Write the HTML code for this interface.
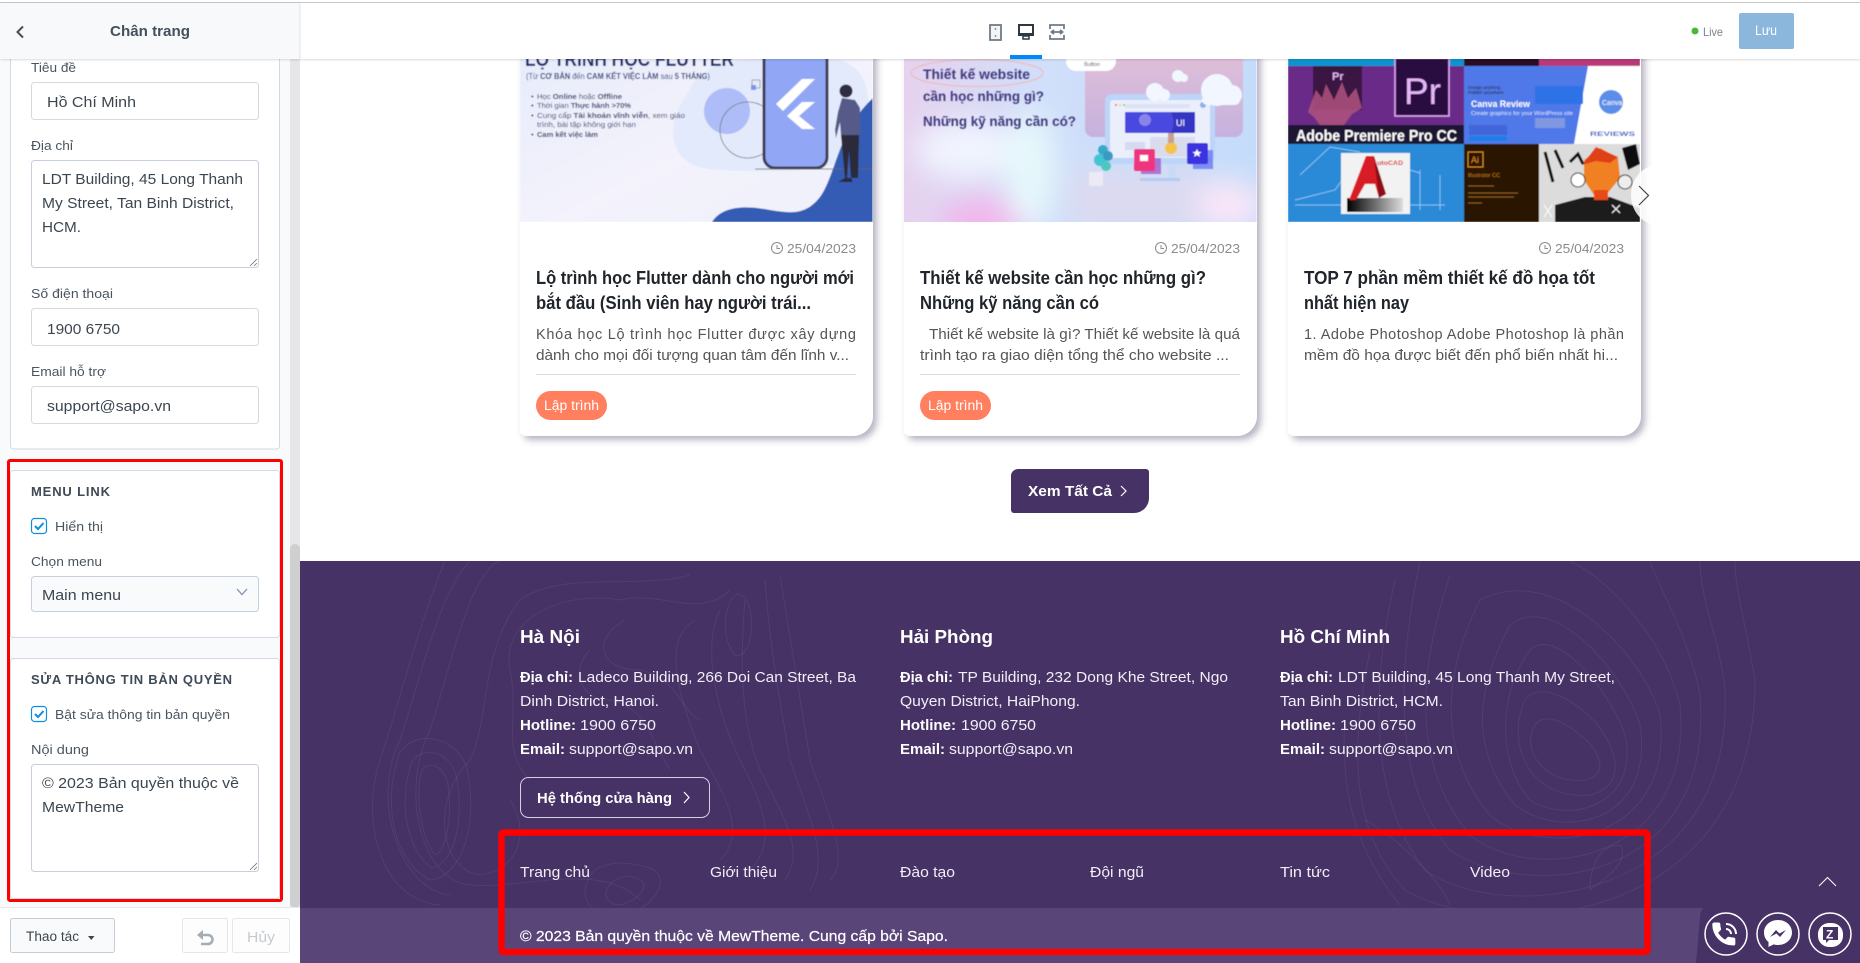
<!DOCTYPE html>
<html lang="vi"><head><meta charset="utf-8"><title>Chân trang</title>
<style>
html,body{margin:0;padding:0;background:#fff;overflow:hidden;width:1860px;height:963px}
svg{display:block;position:absolute;left:0;top:0}
text{font-family:"Liberation Sans","Noto Sans CJK SC",sans-serif}
.lab{font-size:13px;fill:#4a5560}.inp{font-size:15px;fill:#3c4650}
.h{font-size:13px;font-weight:bold;fill:#3f4a56}
.dt{font-size:13px;fill:#8b8b8b}.ti{font-size:18px;font-weight:bold;fill:#20252b}.de{font-size:14.5px;fill:#555}
.tg{font-size:13.5px;fill:#fff}
.f{font-size:15px;fill:#f1eef6}.fb{font-size:15px;fill:#fff;font-weight:bold}.fh{font-size:18px;fill:#fff;font-weight:bold}
.c path{fill:none;stroke:#fff;stroke-opacity:.06;stroke-width:1}
</style></head><body>
<svg width="1860" height="963" viewBox="0 0 1860 963" xmlns="http://www.w3.org/2000/svg">
<defs>
<filter id="sh" x="-10%" y="-10%" width="120%" height="120%"><feDropShadow dx="4" dy="4" stdDeviation="3.5" flood-color="#4a4468" flood-opacity=".4"/></filter>
<filter id="b1"><feGaussianBlur stdDeviation=".45"/></filter>
<filter id="b9" x="-60%" y="-60%" width="220%" height="220%"><feGaussianBlur stdDeviation="14"/></filter>
<filter id="sd" x="-5%" y="-20%" width="110%" height="160%"><feDropShadow dx="0" dy="1" stdDeviation="1" flood-color="#000" flood-opacity=".14"/></filter>
<clipPath id="c1"><rect x="520" y="40" width="352.500" height="182"/></clipPath>
<clipPath id="c2"><rect x="904" y="40" width="352.500" height="182"/></clipPath>
<clipPath id="c3"><rect x="1288" y="40" width="352" height="182"/></clipPath>
<clipPath id="ft"><rect x="300" y="561" width="1560" height="402"/></clipPath>
<linearGradient id="g1" x1="0" y1="0" x2="1" y2="1"><stop offset="0" stop-color="#e6ebfb"/><stop offset=".55" stop-color="#f4f3fc"/><stop offset="1" stop-color="#eef0fb"/></linearGradient>
<linearGradient id="g2" x1="0" y1="0" x2="1" y2="0"><stop offset="0" stop-color="#e6d2ee"/><stop offset=".4" stop-color="#d0dffa"/><stop offset="1" stop-color="#c4dcfa"/></linearGradient>
<linearGradient id="g3" x1="0" y1="0" x2="0" y2="1"><stop offset="0" stop-color="#e8c2d6"/><stop offset="1" stop-color="#c5b2de"/></linearGradient>
<linearGradient id="g4" x1="0" y1="0" x2="1" y2="0"><stop offset="0" stop-color="#000"/><stop offset="1" stop-color="#ddd"/></linearGradient>
</defs>

<rect width="1860" height="963" fill="#fff"/>

<!-- cards -->
<g filter="url(#sh)">
<path d="M520 40H873V416a20 20 0 0 1-20 20H526a6 6 0 0 1-6-6Z" fill="#fff"/>
<path d="M904 40H1257V416a20 20 0 0 1-20 20H910a6 6 0 0 1-6-6Z" fill="#fff"/>
<path d="M1288 40H1641V416a20 20 0 0 1-20 20H1294a6 6 0 0 1-6-6Z" fill="#fff"/>
</g>

<!-- image 1 -->
<g clip-path="url(#c1)"><g filter="url(#b1)">
<rect x="520" y="40" width="353" height="182" fill="url(#g1)"/>
<path d="M690 90C700 60 760 50 840 60C870 70 875 100 860 150C840 175 760 172 720 170C670 170 660 130 690 90Z" fill="#e3eafb"/>
<path d="M712 222C722 206 745 205 770 210C790 213 805 216 820 197C836 175 838 130 873 98V222Z" fill="#365cb4"/>
<circle cx="727" cy="111" r="23" fill="#aebdf7"/>
<circle cx="748" cy="130" r="28" fill="none" stroke="#777" stroke-width=".8"/>
<rect x="752" y="80" width="8" height="8" fill="none" stroke="#777" stroke-width=".6"/><rect x="751" y="85" width="5" height="5" fill="#7f95ea"/>
<rect x="764" y="40" width="63" height="128" rx="11" fill="#91a7f6" stroke="#3f3d56" stroke-width="3"/>
<path d="M755 169H873" stroke="#666" stroke-width=".8"/>
<path d="M815 79H802L776 104L783 111Z" fill="#fff"/>
<path d="M815 102H802L787 116L802 129H815L799 116Z" fill="#fff"/>
<circle cx="846" cy="91" r="6.500" fill="#2f2e41"/>
<path d="M842 98L855 100L860 108V135H841L840 122L836 138L835 130L838 112Z" fill="#575a89"/>
<path d="M841 135H859L858 178H851L849 150L847 178H851L853 182H838L845 178Z" fill="#2b2a3a"/>
<text x="525" y="66" font-size="20" font-weight="bold" fill="#1f2f6b" textLength="209" lengthAdjust="spacingAndGlyphs">LỘ TRÌNH HỌC FLUTTER</text>
<text x="526" y="79" font-size="8" fill="#2a3a78" textLength="184" lengthAdjust="spacingAndGlyphs">(Từ <tspan font-weight="bold">CƠ BẢN</tspan> đến <tspan font-weight="bold">CAM KẾT VIỆC LÀM</tspan> sau <tspan font-weight="bold">5 THÁNG</tspan>)</text>
<g font-size="7.500" fill="#2a3468">
<text x="531" y="99">•</text><text x="537" y="99" textLength="85" lengthAdjust="spacingAndGlyphs">Học <tspan font-weight="bold">Online</tspan> hoặc <tspan font-weight="bold">Offline</tspan></text>
<text x="531" y="108">•</text><text x="537" y="108" textLength="94" lengthAdjust="spacingAndGlyphs">Thời gian <tspan font-weight="bold">Thực hành &gt;70%</tspan></text>
<text x="531" y="118">•</text><text x="537" y="118" textLength="148" lengthAdjust="spacingAndGlyphs">Cung cấp <tspan font-weight="bold">Tài khoản vĩnh viễn</tspan>, xem giáo</text>
<text x="537" y="127" textLength="99" lengthAdjust="spacingAndGlyphs">trình, bài tập không giới hạn</text>
<text x="531" y="137">•</text><text x="537" y="137" textLength="61" font-weight="bold" lengthAdjust="spacingAndGlyphs">Cam kết việc làm</text>
</g></g></g>

<!-- image 2 -->
<g clip-path="url(#c2)">
<rect x="904" y="40" width="353" height="182" fill="url(#g2)"/>
<g filter="url(#b9)"><ellipse cx="985" cy="222" rx="45" ry="26" fill="#f2b6ec"/><ellipse cx="965" cy="150" rx="50" ry="28" fill="#f1f5ff"/><ellipse cx="1030" cy="170" rx="25" ry="60" fill="#e6f8fb"/><ellipse cx="1225" cy="205" rx="40" ry="25" fill="#fbe6f8"/><rect x="1070" y="170" width="130" height="60" fill="#dcdaf0"/></g>
<g filter="url(#b1)">
<rect x="1085" y="30" width="158" height="107" rx="8" fill="url(#g3)"/>
<rect x="1066" y="50" width="50" height="21" rx="10" fill="#fff"/>
<text x="1084" y="66" font-size="5.500" fill="#445">Button</text>
<rect x="1105" y="94" width="110" height="70" rx="7" fill="#bcd5f8"/>
<rect x="1110" y="100" width="100" height="58" rx="3" fill="#ebeffb"/>
<rect x="1125" y="112" width="70" height="21" rx="1" fill="#4a4ae0"/><path d="M1171 112h24v21h-24q5-10 0-21Z" fill="#3434c4"/>
<text x="1176" y="126" font-size="9" fill="#fff">UI</text>
<circle cx="1145" cy="120" r="6" fill="#8a84ea"/>
<rect x="1125" y="104" width="65" height="4" rx="2" fill="#dce2f6"/>
<circle cx="1116" cy="105" r="1" fill="#e55"/><circle cx="1120" cy="105" r="1" fill="#ec5"/><circle cx="1124" cy="105" r="1" fill="#5c7"/><circle cx="1203" cy="105" r="3" fill="#8db0ec"/>
<rect x="1150" y="137" width="45" height="20" fill="#d9dcec"/>
<rect x="1125" y="142" width="20" height="8" fill="#d5daf0"/>
<circle cx="1171" cy="148" r="6" fill="#f6c34a"/><rect x="1168" y="133" width="6" height="10" fill="#c8a090"/>
<rect x="1168" y="164" width="8" height="14" fill="#cadaf6"/><rect x="1140" y="178" width="40" height="3" fill="#b4cbf4"/>
<rect x="1141" y="158" width="20" height="16" fill="#9a4ac8" opacity=".7"/>
<rect x="1134" y="149" width="21" height="22" rx="2" fill="#f0357f"/><rect x="1140" y="155" width="8" height="6" fill="#fff"/>
<rect x="1193" y="150" width="20" height="19" fill="#4a58f0" opacity=".6"/>
<rect x="1187" y="143" width="21" height="21" rx="2" fill="#3b33e0"/><path d="M1197 149l1.500 3h3l-2.500 2 1 3-3-2-3 2 1-3-2.500-2h3Z" fill="#fff"/>
<circle cx="1103" cy="150" r="5" fill="#38a8c8"/><circle cx="1100" cy="160" r="6" fill="#44c4d4"/><circle cx="1108" cy="156" r="5" fill="#3a9ac4"/><circle cx="1106" cy="166" r="5" fill="#4cc8c0"/>
<rect x="1089" y="172" width="14" height="14" fill="#eceaf4"/>
<g fill="#f2f6ff"><circle cx="1155" cy="92" r="9"/><circle cx="1164" cy="95" r="6"/><circle cx="1217" cy="90" r="16"/><circle cx="1232" cy="95" r="10"/><rect x="1202" y="95" width="38" height="10" rx="5"/><circle cx="1178" cy="76" r="6"/><circle cx="1184" cy="78" r="4"/></g>
<ellipse cx="977" cy="73" rx="66" ry="13.500" fill="none" stroke="#edb8b8" stroke-width="1"/>
<g font-size="13.500" font-weight="bold" fill="#403a7e">
<text x="923" y="79" textLength="107" lengthAdjust="spacingAndGlyphs">Thiết kế website</text>
<text x="923" y="101" textLength="121" lengthAdjust="spacingAndGlyphs">cần học những gì?</text>
<text x="923" y="126" textLength="153" lengthAdjust="spacingAndGlyphs">Những kỹ năng cần có?</text></g>
</g></g>

<!-- image 3 -->
<g clip-path="url(#c3)"><g filter="url(#b1)">
<rect x="1288" y="40" width="176" height="26" fill="#0f94d0"/><rect x="1464" y="40" width="75" height="26" fill="#2a0a24"/><rect x="1539" y="40" width="101" height="26" fill="#b83a78"/>
<rect x="1288" y="66" width="176" height="59" fill="#6b2a88"/>
<rect x="1288" y="125" width="176" height="19" fill="#1f1330"/>
<rect x="1313" y="66" width="49" height="44" fill="#3a1242"/>
<path d="M1308 112l8-22 6 8 4-14 8 16 8-18 6 16 8-10 6 20-10 6-8 11h-24l-6-8Z" fill="#b0557e" opacity=".85"/>
<text x="1332" y="80" font-size="11" font-weight="bold" fill="#e5b5fa">Pr</text>
<rect x="1395" y="58" width="54" height="58" fill="#2a0c40" stroke="#e0a8f4" stroke-width="1.500"/>
<text x="1404" y="104" font-size="37" fill="#e5b5fa">Pr</text>
<text x="1296" y="141" font-size="16" font-weight="bold" fill="#fff" textLength="161" lengthAdjust="spacingAndGlyphs">Adobe Premiere Pro CC</text>
<rect x="1464" y="66" width="176" height="78" fill="#4f78e8"/>
<path d="M1588 66H1640V144H1574Z" fill="#fff"/>
<rect x="1535" y="86" width="48" height="18" fill="#2f72e8"/>
<text x="1468" y="89" font-size="4.500" fill="#223">Design anything.</text><text x="1468" y="94" font-size="4.500" fill="#223">Publish anywhere.</text>
<text x="1471" y="107" font-size="9" font-weight="bold" fill="#fff" textLength="59" lengthAdjust="spacingAndGlyphs">Canva Review</text>
<text x="1471" y="115" font-size="5.500" fill="#dfe8ff" textLength="102" lengthAdjust="spacingAndGlyphs">Create graphics for your WordPress site</text>
<rect x="1469" y="125" width="38" height="10" fill="#3f66dc"/><rect x="1469" y="136" width="38" height="5" fill="#1f7ee8"/><rect x="1535" y="118" width="30" height="10" fill="#8098e0"/>
<circle cx="1611" cy="102" r="12" fill="#5a8ee8"/><text x="1602" y="105" font-size="7" fill="#fff">Canva</text>
<text x="1590" y="136" font-size="6.500" font-weight="bold" fill="#3d5cc0" textLength="45" lengthAdjust="spacingAndGlyphs">REVIEWS</text>
<rect x="1288" y="144" width="176" height="78" fill="#2a8ad8"/>
<path d="M1295 200l40-10 25-35 60 18M1300 175l30-28 30 5M1420 170v40M1440 175v35M1295 205h150" stroke="#a4d4f8" stroke-width=".7" fill="none"/>
<rect x="1341" y="153" width="69" height="61" fill="#f2f2f2"/>
<rect x="1347" y="198" width="56" height="14" fill="url(#g4)"/>
<path d="M1349 200 1366 156h8l12 38-7 4-4-14h-10l-9 16Z" fill="#d81f26"/>
<path d="M1374 156l12 38-7 4-5-40Z" fill="#8e1015"/>
<text x="1372" y="165" font-size="6.500" font-weight="bold" fill="#d81f26" textLength="31" lengthAdjust="spacingAndGlyphs">AutoCAD</text>
<rect x="1464" y="144" width="75" height="78" fill="#2a1505"/>
<rect x="1468" y="152" width="15" height="15" fill="#2a1505" stroke="#e08a20"/><text x="1471" y="163" font-size="9" fill="#e08a20">Ai</text>
<text x="1468" y="177" font-size="5.500" fill="#c87820">Illustrator CC</text>
<g stroke="#8a5a20" stroke-width="1"><path d="M1468 186h26M1468 193h50M1468 197h46M1468 203h14"/></g>
<rect x="1539" y="144" width="101" height="78" fill="#dcdcdc"/>
<path d="M1555 222V205L1585 197L1610 197L1640 208V222Z" fill="#1e1e1e"/>
<path d="M1584 160l16-12 18 10 2 20-14 17h-12l-10-15Z" fill="#f08020"/><path d="M1582 165l14-18 22 10-8 6-14-2Z" fill="#e04018"/><rect x="1594" y="190" width="14" height="10" fill="#e84818"/>
<path d="M1545 152l8 30M1555 150l8 18M1570 162l8-8 5 10" stroke="#111" stroke-width="3" fill="none"/>
<path d="M1622 148l14-4 4 20-12 6Z" fill="#111"/><circle cx="1578" cy="180" r="7" fill="#fff" stroke="#111"/><circle cx="1625" cy="182" r="7" fill="#eee" stroke="#111"/>
<path d="M1544 205l8 12M1552 205l-8 12M1612 205l8 8M1620 205l-8 8" stroke="#fff"/>
</g></g>
<path d="M1655 165a28 30 0 0 0-24 30a28 30 0 0 0 24 30Z" fill="#fff" fill-opacity=".85"/>
<path d="M1639 186l9.500 9.500-9.500 9.500" fill="none" stroke="#444" stroke-width="1.200"/>

<!-- card text -->
<g fill="none" stroke="#8b8b8b" stroke-width="1"><circle cx="777" cy="248" r="5.500"/><path d="M777 245v3.500h3"/><circle cx="1161" cy="248" r="5.500"/><path d="M1161 245v3.500h3"/><circle cx="1545" cy="248" r="5.500"/><path d="M1545 245v3.500h3"/></g>
<text class="dt" x="787" y="253" textLength="69" lengthAdjust="spacingAndGlyphs">25/04/2023</text>
<text class="dt" x="1171" y="253" textLength="69" lengthAdjust="spacingAndGlyphs">25/04/2023</text>
<text class="dt" x="1555" y="253" textLength="69" lengthAdjust="spacingAndGlyphs">25/04/2023</text>

<text class="ti" x="536" y="284" textLength="318" lengthAdjust="spacingAndGlyphs">Lộ trình học Flutter dành cho người mới</text>
<text class="ti" x="536" y="309" textLength="275" lengthAdjust="spacingAndGlyphs">bắt đầu (Sinh viên hay người trái...</text>
<text class="de" x="536" y="339" textLength="320" lengthAdjust="spacing">Khóa học Lộ trình học Flutter được xây dựng</text>
<text class="de" x="536" y="360" textLength="313" lengthAdjust="spacingAndGlyphs">dành cho mọi đối tượng quan tâm đến lĩnh v...</text>
<rect x="536" y="374" width="320" height="1" fill="#dcdcdc"/>
<rect x="536" y="391" width="71" height="29" rx="14.500" fill="#ff7f5e"/>
<text class="tg" x="544" y="410" textLength="55" lengthAdjust="spacingAndGlyphs">Lập trình</text>

<text class="ti" x="920" y="284" textLength="286" lengthAdjust="spacingAndGlyphs">Thiết kế website cần học những gì?</text>
<text class="ti" x="920" y="309" textLength="179" lengthAdjust="spacingAndGlyphs">Những kỹ năng cần có</text>
<text class="de" x="929" y="339" textLength="311" lengthAdjust="spacingAndGlyphs">Thiết kế website là gì? Thiết kế website là quá</text>
<text class="de" x="920" y="360" textLength="309" lengthAdjust="spacingAndGlyphs">trình tạo ra giao diện tổng thể cho website ...</text>
<rect x="920" y="374" width="320" height="1" fill="#dcdcdc"/>
<rect x="920" y="391" width="71" height="29" rx="14.500" fill="#ff7f5e"/>
<text class="tg" x="928" y="410" textLength="55" lengthAdjust="spacingAndGlyphs">Lập trình</text>

<text class="ti" x="1304" y="284" textLength="291" lengthAdjust="spacingAndGlyphs">TOP 7 phần mềm thiết kế đồ họa tốt</text>
<text class="ti" x="1304" y="309" textLength="105" lengthAdjust="spacingAndGlyphs">nhất hiện nay</text>
<text class="de" x="1304" y="339" textLength="320" lengthAdjust="spacing">1. Adobe Photoshop Adobe Photoshop là phần</text>
<text class="de" x="1304" y="360" textLength="314" lengthAdjust="spacingAndGlyphs">mềm đồ họa được biết đến phổ biến nhất hi...</text>

<!-- view all -->
<path d="M1018 469H1146a3 3 0 0 1 3 3V498a15 15 0 0 1-15 15H1014a3 3 0 0 1-3-3V476a7 7 0 0 1 7-7Z" fill="#473266"/>
<text x="1028" y="496" font-size="15" font-weight="bold" fill="#fff" textLength="84" lengthAdjust="spacingAndGlyphs">Xem Tất Cả</text>
<path d="M1121 486l5 5-5 5" fill="none" stroke="#fff" stroke-width="1.200"/>

<!-- footer -->
<rect x="300" y="561" width="1560" height="402" fill="#473266"/>
<g class="c" clip-path="url(#ft)">
<path d="M445 561C420 620 400 700 380 760C360 820 380 900 440 905"/>
<path d="M470 561C440 590 420 680 400 740C370 800 400 890 450 895"/>
<path d="M500 561C470 570 450 670 430 730C400 790 420 880 470 885C520 890 600 860 640 900"/>
<path d="M690 575C640 590 560 570 520 600C480 650 490 720 470 760C430 800 440 870 480 875C520 870 530 830 510 800"/>
<path d="M730 590C700 620 660 590 620 600C560 590 500 620 510 670C520 720 500 750 530 780"/>
<path d="M780 575C790 640 800 700 810 760C830 820 850 860 830 880"/>
<path d="M765 580C770 650 780 700 790 760C810 820 830 860 810 890"/>
<path d="M745 600C740 660 740 720 760 770C785 820 805 850 785 880"/>
<path d="M720 610C700 650 720 720 740 760C760 800 780 840 750 870"/>
<path d="M695 620C660 640 680 700 700 750C720 790 750 830 720 860"/>
<path d="M625 620C590 640 600 670 640 670C680 680 680 710 700 720"/>
<path d="M590 650C570 670 580 700 610 700C650 710 650 740 670 770"/>
<path d="M735 595C722 610 722 640 735 655C748 660 755 630 750 610C748 598 740 592 735 595Z"/>
<path d="M422 770C414 795 422 840 435 855C448 850 452 810 448 785C444 765 428 760 422 770Z"/>
<path d="M412 762C398 800 406 850 432 868C458 862 464 810 456 775C448 750 422 746 412 762Z"/>
<path d="M400 752C382 800 392 860 430 880C468 875 478 810 466 765C452 735 416 730 400 752Z"/>
<path d="M615 880C600 890 605 905 620 905C640 900 650 885 640 880C630 875 623 875 615 880Z"/>
<path d="M595 870C575 890 585 920 625 915C660 905 670 875 650 868C630 862 610 860 595 870Z"/>
<path d="M1535 725C1520 750 1545 785 1585 780C1610 775 1600 750 1580 735C1565 722 1545 712 1535 725Z"/>
<path d="M1525 700C1505 745 1530 800 1590 795C1630 785 1615 745 1595 722C1575 700 1540 680 1525 700Z"/>
<path d="M1530 650C1500 690 1495 760 1530 800C1570 825 1640 805 1625 735C1610 690 1555 625 1530 650Z"/>
<path d="M1510 625C1475 690 1470 750 1515 805C1560 840 1655 825 1640 725C1625 675 1555 590 1510 625Z"/>
<path d="M1480 600C1440 680 1440 755 1490 815C1540 860 1675 845 1660 715C1645 660 1560 560 1480 600Z"/>
<path d="M1450 575C1415 680 1415 770 1470 835C1530 885 1695 865 1680 705C1665 640 1610 580 1570 561"/>
<path d="M1420 561C1395 680 1395 785 1450 850C1520 900 1715 890 1700 695C1690 640 1660 590 1650 561"/>
<path d="M1395 580C1370 690 1370 800 1425 870C1500 925 1735 905 1725 690C1720 640 1700 600 1700 561"/>
<path d="M1370 650C1350 750 1350 830 1405 890C1500 945 1755 925 1755 680C1745 620 1735 590 1735 561"/>
<path d="M1345 720C1340 790 1355 850 1400 905"/>
<path d="M1365 820C1400 840 1440 880 1450 905"/>
<path d="M1590 890C1610 875 1630 860 1620 845C1600 845 1590 865 1590 890Z"/>
</g>
<rect x="300" y="908" width="1560" height="55" fill="#5a4579"/>

<text class="fh" x="520" y="643" textLength="60" lengthAdjust="spacingAndGlyphs">Hà Nội</text>
<text class="fh" x="900" y="643" textLength="93" lengthAdjust="spacingAndGlyphs">Hải Phòng</text>
<text class="fh" x="1280" y="643" textLength="110" lengthAdjust="spacingAndGlyphs">Hồ Chí Minh</text>

<text class="fb" x="520" y="682" textLength="53" lengthAdjust="spacingAndGlyphs">Địa chỉ:</text><text class="f" x="578" y="682" textLength="278" lengthAdjust="spacingAndGlyphs">Ladeco Building, 266 Doi Can Street, Ba</text>
<text class="f" x="520" y="706" textLength="139" lengthAdjust="spacingAndGlyphs">Dinh District, Hanoi.</text>
<text class="fb" x="520" y="730" textLength="56" lengthAdjust="spacingAndGlyphs">Hotline:</text><text class="f" x="580" y="730" textLength="76" lengthAdjust="spacingAndGlyphs">1900 6750</text>
<text class="fb" x="520" y="754" textLength="45" lengthAdjust="spacingAndGlyphs">Email:</text><text class="f" x="569" y="754" textLength="124" lengthAdjust="spacingAndGlyphs">support@sapo.vn</text>

<text class="fb" x="900" y="682" textLength="53" lengthAdjust="spacingAndGlyphs">Địa chỉ:</text><text class="f" x="958" y="682" textLength="270" lengthAdjust="spacingAndGlyphs">TP Building, 232 Dong Khe Street, Ngo</text>
<text class="f" x="900" y="706" textLength="180" lengthAdjust="spacingAndGlyphs">Quyen District, HaiPhong.</text>
<text class="fb" x="900" y="730" textLength="56" lengthAdjust="spacingAndGlyphs">Hotline:</text><text class="f" x="961" y="730" textLength="75" lengthAdjust="spacingAndGlyphs">1900 6750</text>
<text class="fb" x="900" y="754" textLength="45" lengthAdjust="spacingAndGlyphs">Email:</text><text class="f" x="949" y="754" textLength="124" lengthAdjust="spacingAndGlyphs">support@sapo.vn</text>

<text class="fb" x="1280" y="682" textLength="53" lengthAdjust="spacingAndGlyphs">Địa chỉ:</text><text class="f" x="1338" y="682" textLength="277" lengthAdjust="spacingAndGlyphs">LDT Building, 45 Long Thanh My Street,</text>
<text class="f" x="1280" y="706" textLength="163" lengthAdjust="spacingAndGlyphs">Tan Binh District, HCM.</text>
<text class="fb" x="1280" y="730" textLength="56" lengthAdjust="spacingAndGlyphs">Hotline:</text><text class="f" x="1340" y="730" textLength="76" lengthAdjust="spacingAndGlyphs">1900 6750</text>
<text class="fb" x="1280" y="754" textLength="45" lengthAdjust="spacingAndGlyphs">Email:</text><text class="f" x="1329" y="754" textLength="124" lengthAdjust="spacingAndGlyphs">support@sapo.vn</text>

<rect x="520.500" y="777.500" width="189" height="40" rx="8" fill="none" stroke="#d6d0e0"/>
<text class="fb" x="537" y="803" textLength="135" lengthAdjust="spacingAndGlyphs">Hệ thống cửa hàng</text>
<path d="M684 792l5 5.500-5 5.500" fill="none" stroke="#fff" stroke-width="1.200"/>

<text class="f" x="520" y="877" textLength="70" lengthAdjust="spacingAndGlyphs">Trang chủ</text>
<text class="f" x="710" y="877" textLength="67" lengthAdjust="spacingAndGlyphs">Giới thiệu</text>
<text class="f" x="900" y="877" textLength="55" lengthAdjust="spacingAndGlyphs">Đào tạo</text>
<text class="f" x="1090" y="877" textLength="54" lengthAdjust="spacingAndGlyphs">Đội ngũ</text>
<text class="f" x="1280" y="877" textLength="50" lengthAdjust="spacingAndGlyphs">Tin tức</text>
<text class="f" x="1470" y="877" textLength="40" lengthAdjust="spacingAndGlyphs">Video</text>
<text class="f" x="520" y="941" textLength="428" lengthAdjust="spacingAndGlyphs" style="fill:#fff;stroke:#fff;stroke-width:.2">© 2023 Bản quyền thuộc về MewTheme. Cung cấp bởi Sapo.</text>

<!-- social -->
<path d="M1860 903H1714a14 14 0 0 0-14 14L1696 963H1860Z" fill="#473266"/>
<path d="M1819 886l8.500-8.500 8.500 8.500" fill="none" stroke="#fff" stroke-width="1"/>
<g fill="none" stroke="#fff" stroke-width="1.500"><circle cx="1726" cy="934" r="21"/><circle cx="1778" cy="934" r="21"/><circle cx="1830" cy="934" r="21"/></g>
<path transform="translate(1709.4 919.6) scale(1.2)" fill="#fff" stroke="#fff" stroke-width="1.200" stroke-linejoin="round" d="M6.620 10.790c1.440 2.830 3.760 5.140 6.590 6.590l2.200-2.200c.27-.27.67-.36 1.020-.24 1.120.37 2.330.57 3.570.57.55 0 1 .45 1 1V20c0 .55-.45 1-1 1-9.390 0-17-7.610-17-17 0-.55.45-1 1-1h3.500c.55 0 1 .45 1 1 0 1.250.2 2.450.57 3.570.11.35.03.74-.25 1.020l-2.200 2.200z"/>
<path d="M1726 929a5 5 0 0 1 5 5M1726 924a10 10 0 0 1 10 10" fill="none" stroke="#fff" stroke-width="2"/>
<path d="M1778 920c8 0 14 5.500 14 12.500s-6 12.500-14 12.500c-1.500 0-3-.2-4.300-.6L1768.500 947v-5c-3-2.300-4.500-5.700-4.500-9.500 0-7 6-12.500 14-12.500Z" fill="#fff"/>
<path d="M1770 937l6-7 3.500 3.500 6.500-3.500-6 7-3.500-3.500Z" fill="#473266"/>
<rect x="1818" y="923" width="25" height="24" rx="11" fill="#fff"/>
<path d="M1823 927h15v13h-9l-3 3v-3h-3Z" fill="#473266"/>
<text x="1826" y="938.500" font-size="12" font-weight="bold" fill="#fff">Z</text>

<!-- topbar -->
<rect x="300" y="3" width="1560" height="56" fill="#fff" filter="url(#sd)"/>
<rect x="0" y="0" width="1860" height="2" fill="#fff"/>
<rect x="0" y="2" width="1860" height="1" fill="#c6c6c6"/>
<g fill="none" stroke="#6f7b87" stroke-width="1.800">
<rect x="990" y="25" width="11" height="15" fill="#f2f4f6"/>
<path d="M1050 29v-4h14v4M1050 35v4h14v-4M1052 32h10M1054 30l-2.500 2 2.500 2M1060 30l2.500 2-2.500 2"/>
</g>
<circle cx="995.500" cy="29" r=".9" fill="#6f7b87"/><circle cx="995.500" cy="36" r=".9" fill="#6f7b87"/>
<rect x="1019" y="25" width="14" height="10" fill="none" stroke="#2d3842" stroke-width="2"/><rect x="1019" y="33" width="14" height="3" fill="#2d3842"/>
<rect x="1023" y="36" width="6" height="3" fill="none" stroke="#2d3842" stroke-width="1.500"/>
<rect x="1010" y="55" width="32" height="4" fill="#0088ff"/>
<circle cx="1695" cy="31" r="3.500" fill="#4cb838"/>
<text x="1703" y="36" font-size="12" fill="#7a848d" textLength="20" lengthAdjust="spacingAndGlyphs">Live</text>
<rect x="1739" y="13" width="55" height="36" rx="2" fill="#8cb7dc"/>
<text x="1755" y="35" font-size="13.500" fill="#fff" textLength="22" lengthAdjust="spacingAndGlyphs">Lưu</text>

<!-- sidebar -->
<rect x="0" y="3" width="300" height="960" fill="#f9fafc"/>
<rect x="290" y="59" width="10" height="849" fill="#e6e6e8"/>
<rect x="290" y="544" width="10" height="364" rx="5" fill="#cfcfcf"/>
<rect x="10.500" y="40" width="269" height="409" rx="3" fill="#fff" stroke="#d3dae4"/>
<g fill="#fff" stroke="#d3dae4">
<rect x="31.500" y="82.500" width="227" height="37" rx="3"/>
<rect x="31.500" y="160.500" width="227" height="107" rx="3" stroke="#c5d0dc"/>
<rect x="31.500" y="308.500" width="227" height="37" rx="3"/>
<rect x="31.500" y="386.500" width="227" height="37" rx="3"/>
</g>
<text class="lab" x="31" y="72" textLength="45" lengthAdjust="spacingAndGlyphs">Tiêu đề</text>
<text class="inp" x="47" y="107" textLength="89" lengthAdjust="spacingAndGlyphs">Hồ Chí Minh</text>
<text class="lab" x="31" y="150" textLength="42" lengthAdjust="spacingAndGlyphs">Địa chỉ</text>
<text class="inp" x="42" y="184" textLength="201" lengthAdjust="spacingAndGlyphs">LDT Building, 45 Long Thanh</text>
<text class="inp" x="42" y="208" textLength="192" lengthAdjust="spacingAndGlyphs">My Street, Tan Binh District,</text>
<text class="inp" x="42" y="232" textLength="39" lengthAdjust="spacingAndGlyphs">HCM.</text>
<path d="M250 266l7-7M254 266l3-3" stroke="#777" stroke-width=".8"/>
<text class="lab" x="31" y="298" textLength="82" lengthAdjust="spacingAndGlyphs">Số điện thoại</text>
<text class="inp" x="47" y="334" textLength="73" lengthAdjust="spacingAndGlyphs">1900 6750</text>
<text class="lab" x="31" y="376" textLength="75" lengthAdjust="spacingAndGlyphs">Email hỗ trợ</text>
<text class="inp" x="47" y="411" textLength="124" lengthAdjust="spacingAndGlyphs">support@sapo.vn</text>

<rect x="10.500" y="470.500" width="269" height="167" rx="3" fill="#fff" stroke="#d3dae4"/>
<rect x="10.500" y="658.500" width="269" height="240" rx="3" fill="#fff" stroke="#d3dae4"/>
<text class="h" x="31" y="496" textLength="79" lengthAdjust="spacing">MENU LINK</text>
<rect x="31.500" y="518.500" width="15" height="15" rx="3" fill="#fff" stroke="#0e8ed8" stroke-width="1.200"/>
<path d="M35 526l3 3 5.500-6" fill="none" stroke="#0e8ed8" stroke-width="2"/>
<text class="lab" x="55" y="531" textLength="48" lengthAdjust="spacingAndGlyphs">Hiển thị</text>
<text class="lab" x="31" y="566" textLength="71" lengthAdjust="spacingAndGlyphs">Chọn menu</text>
<rect x="31.500" y="576.500" width="227" height="35" rx="3" fill="#f9fafb" stroke="#c5d0dc"/>
<text class="inp" x="42" y="600" textLength="79" lengthAdjust="spacingAndGlyphs">Main menu</text>
<path d="M237 589l5 5.500 5-5.500" fill="none" stroke="#7f93ab" stroke-width="1.300"/>
<text class="h" x="31" y="684" textLength="201" lengthAdjust="spacing">SỬA THÔNG TIN BẢN QUYỀN</text>
<rect x="31.500" y="706.500" width="15" height="15" rx="3" fill="#fff" stroke="#0e8ed8" stroke-width="1.200"/>
<path d="M35 714l3 3 5.500-6" fill="none" stroke="#0e8ed8" stroke-width="2"/>
<text class="lab" x="55" y="719" textLength="175" lengthAdjust="spacingAndGlyphs">Bật sửa thông tin bản quyền</text>
<text class="lab" x="31" y="754" textLength="58" lengthAdjust="spacingAndGlyphs">Nội dung</text>
<rect x="31.500" y="764.500" width="227" height="107" rx="3" fill="#fff" stroke="#c5d0dc"/>
<text class="inp" x="42" y="788" textLength="197" lengthAdjust="spacingAndGlyphs">© 2023 Bản quyền thuộc về</text>
<text class="inp" x="42" y="812" textLength="82" lengthAdjust="spacingAndGlyphs">MewTheme</text>
<path d="M250 870l7-7M254 870l3-3" stroke="#777" stroke-width=".8"/>

<rect x="0" y="908" width="300" height="55" fill="#fff"/><rect x="0" y="907" width="300" height="1" fill="#e8e8ea"/>
<rect x="10.500" y="918.500" width="104" height="34" rx="2" fill="#f9fafb" stroke="#c4cdd5"/>
<text x="26" y="941" font-size="13.500" fill="#3c4650" textLength="53" lengthAdjust="spacingAndGlyphs">Thao tác</text>
<path d="M88 936h6.500l-3.250 4Z" fill="#3c4650"/>
<rect x="182.500" y="918.500" width="45" height="34" rx="2" fill="#fdfdfe" stroke="#e3e7eb"/>
<path d="M201 935h7a4.500 4.500 0 0 1 0 9h-7" fill="none" stroke="#a4acb4" stroke-width="2.500"/><path d="M203 930l-6 5 6 5Z" fill="#a4acb4"/>
<rect x="232.500" y="918.500" width="57" height="34" rx="2" fill="#fdfdfe" stroke="#e3e7eb"/>
<text x="247" y="942" font-size="14.500" fill="#c5cbd1" textLength="28" lengthAdjust="spacingAndGlyphs">Hủy</text>

<!-- header sidebar -->
<rect x="0" y="3" width="300" height="56" fill="#f8f9fb" filter="url(#sd)"/>
<rect x="299" y="3" width="1" height="56" fill="#ececee"/>
<path d="M23 26.500l-5.500 5.500 5.500 5.500" fill="none" stroke="#454f5b" stroke-width="2"/>
<text x="110" y="36" font-size="15" font-weight="bold" fill="#454f5b" textLength="80" lengthAdjust="spacingAndGlyphs">Chân trang</text>

<!-- red annotations -->
<rect x="8.500" y="460.500" width="273" height="440" rx="1.500" fill="none" stroke="#f00" stroke-width="3"/>
<rect x="501.500" y="832.500" width="1146" height="119.500" rx="2" fill="none" stroke="#f00" stroke-width="6.500"/>
</svg>
</body></html>
